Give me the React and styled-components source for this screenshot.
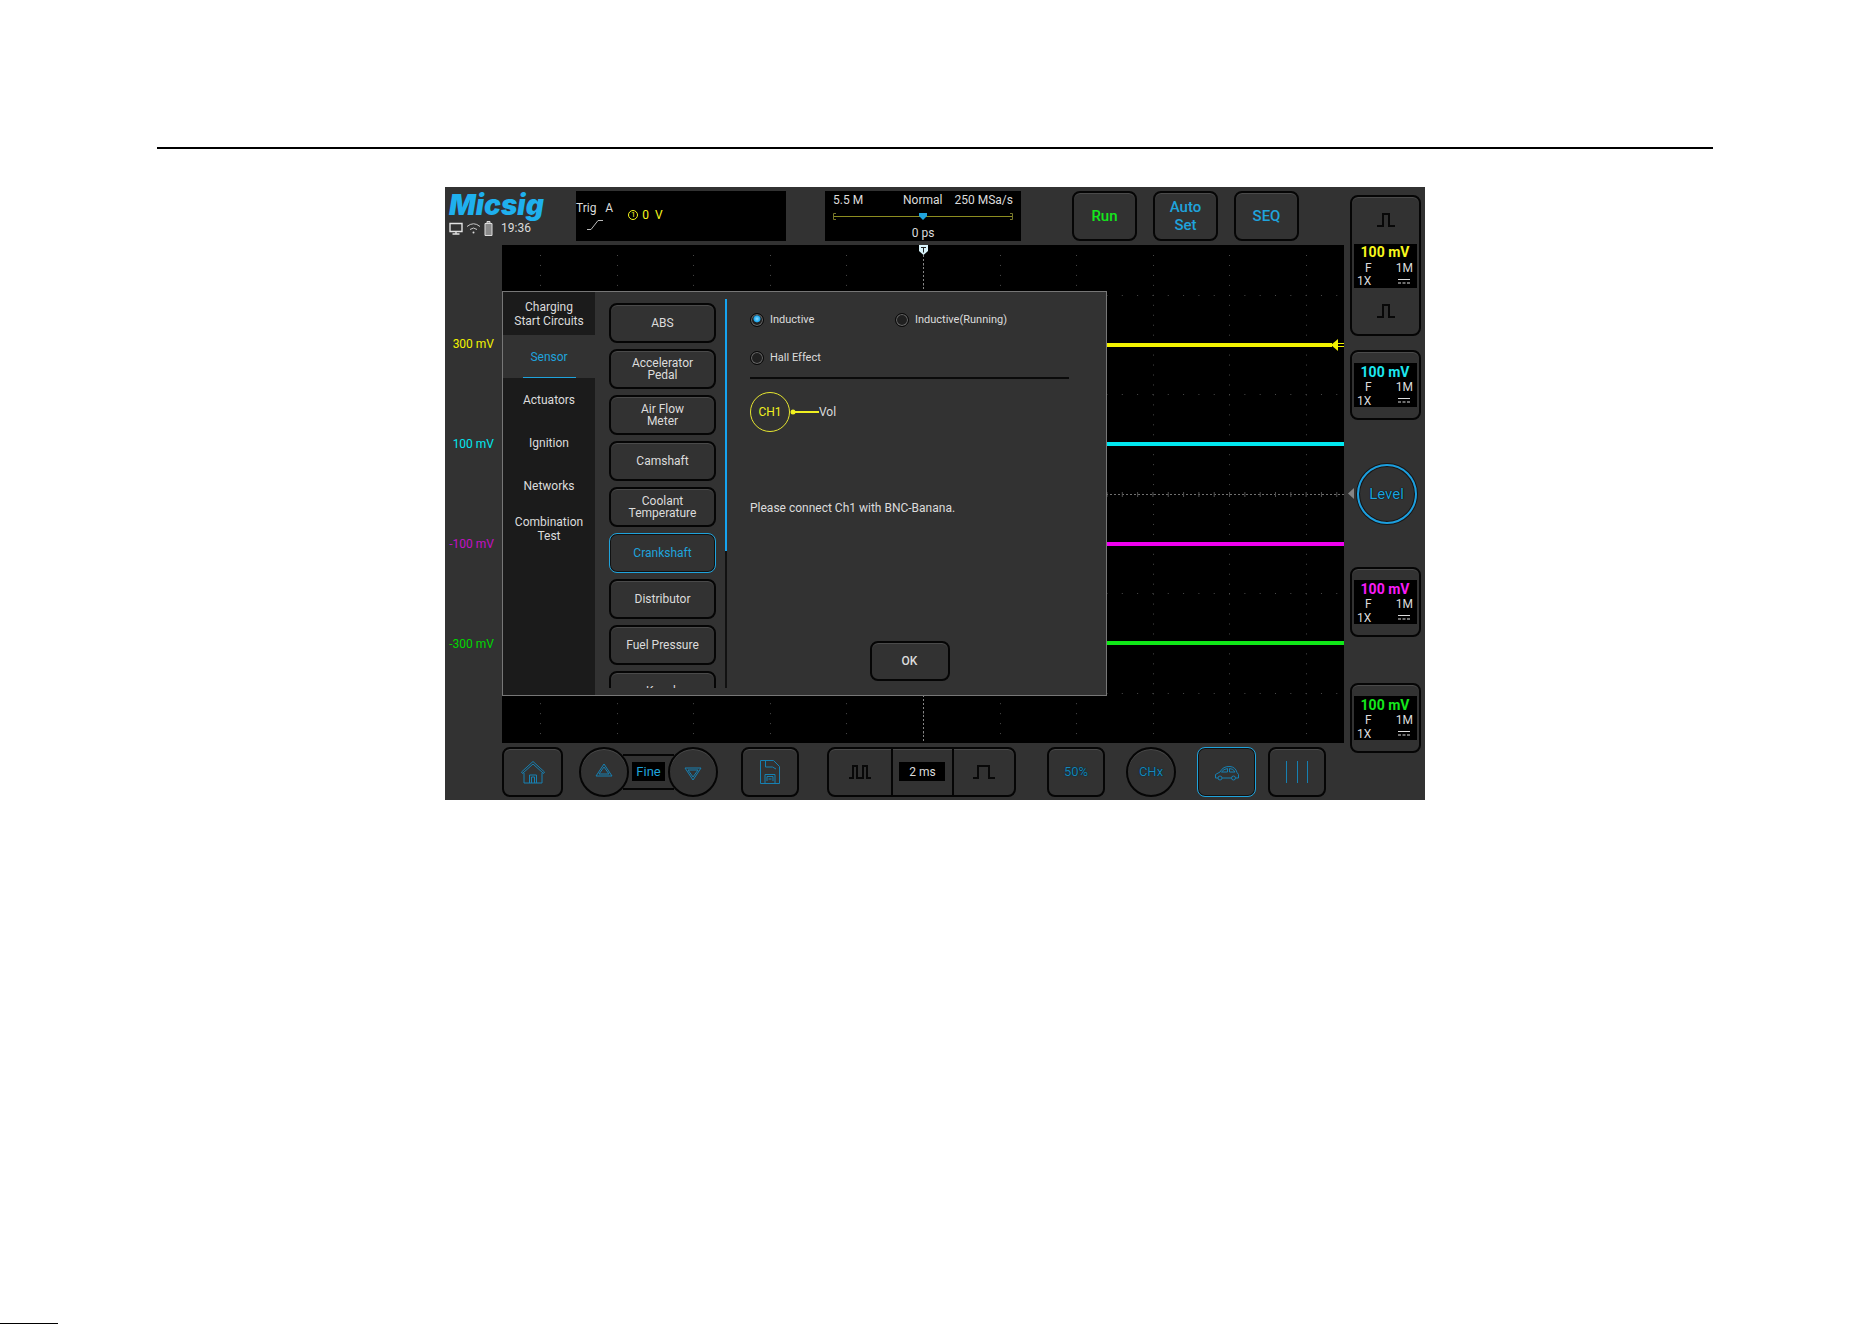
import React, { useState } from "react";
import styled, { createGlobalStyle, css } from "styled-components";

const blue = "#1fa3dc";
const panel = "#323232";

const GlobalStyle = createGlobalStyle`
  *, *::before, *::after { box-sizing: border-box; }
  body { margin: 0; background: #fff; }
  button { margin: 0; padding: 0; font: inherit; color: inherit; cursor: pointer; }
`;

const Page = styled.div`
  min-height: 100vh;
  display: flex;
  flex-direction: column;
  padding: 147px 159px 0 157px;
`;

const Rule = styled.hr`
  width: 100%;
  height: 2px;
  margin: 0 0 38px;
  border: 0;
  background: #000;
`;

const Device = styled.main`
  width: 100%;
  max-width: 980px;
  margin: 0 auto;
  display: flex;
  background: ${panel};
  color: #dcdcdc;
  font: 12px/14px Roboto, "Liberation Sans", sans-serif;
`;

const Primary = styled.div`
  flex: 1;
  min-width: 0;
`;

const Header = styled.header`
  height: 58px;
  display: flex;
  padding: 4px 0;
`;

const Brand = styled.div`
  width: 131px;
  padding-left: 4px;
  flex: none;
`;

const Logo = styled.div`
  font: italic 900 28px/28px Inter, "Open Sans", sans-serif;
  color: #1fb0ee;
`;

const Status = styled.div`
  display: flex;
  align-items: center;
  gap: 3px;
  height: 18px;
  time { margin-left: 5px; }
`;

const Readout = styled.section`
  background: #000;
  height: 50px;
`;

const Trigger = styled(Readout)`
  flex: 0 0 210px;
  display: flex;
  align-items: center;
  gap: 15px;
  padding-bottom: 2px;
`;

const TriggerMode = styled.div`
  display: grid;
  gap: 4px;
  padding-top: 2px;
  white-space: pre;
  svg { margin-left: 11px; }
`;

const TriggerLevel = styled.div`
  display: flex;
  align-items: center;
  gap: 4px;
  color: #f8f81c;
  white-space: pre;
`;

const Ring = styled.span`
  width: 10px;
  height: 10px;
  border: 1px solid currentColor;
  border-radius: 50%;
  font-size: 8px;
  line-height: 8px;
  text-align: center;
`;

const Acquire = styled(Readout)`
  flex: 0 0 196px;
  margin-left: 39px;
  padding: 2px 8px 0;
  display: flex;
  flex-direction: column;
  align-items: center;
  svg { width: 100%; height: 17px; margin: 1px 0; }
`;

const AcquireTop = styled.div`
  width: 100%;
  display: flex;
  span:nth-child(2) { margin: 0 12px 0 auto; }
`;

const keyFace = css`
  display: flex;
  align-items: center;
  justify-content: center;
  background: ${panel};
  border: 2px solid ${(p) => (p.$active ? blue : "#050505")};
  border-width: ${(p) => (p.$active ? "1px" : "2px")};
  border-radius: 8px;
  box-shadow: ${(p) => (p.$active ? "inset 0 0 0 1px #111" : "inset 0 1px 0 #4a4a4a")};
`;

const HeaderKeys = styled.div`
  display: flex;
  gap: 16px;
  margin-left: 51px;
`;

const HeaderKey = styled.button`
  ${keyFace}
  width: 65px;
  height: 50px;
  font-size: 15px;
  font-weight: 500;
  line-height: 18px;
  color: ${(p) => p.$tone || blue};
`;

const Body = styled.div`
  display: flex;
  height: 498px;
`;

const Axis = styled.div`
  flex: 0 0 57px;
  display: grid;
  grid-auto-rows: 100px;
  align-content: start;
  padding-top: 49px;
`;

const AxisLabel = styled.span`
  display: flex;
  align-items: center;
  justify-content: flex-end;
  padding-right: 8px;
  color: ${(p) => p.$tone};
`;

const Plot = styled.div`
  flex: 1;
  min-width: 0;
  position: relative;
  background: #000;
  > svg { display: block; width: 100%; height: 100%; }
`;

const Dialog = styled.section`
  position: absolute;
  left: 0;
  top: 46px;
  width: 605px;
  height: 405px;
  display: flex;
  border: 1px solid #777;
  background: ${panel};
`;

const Menu = styled.nav`
  flex: 0 0 92px;
  background: #1b1b1b;
`;

const MenuItem = styled.button`
  display: flex;
  align-items: center;
  justify-content: center;
  width: 100%;
  height: 43px;
  border: 0;
  white-space: pre-line;
  background: transparent;
  color: ${(p) => (p.$active ? blue : "inherit")};
  ${(p) => p.$active && css`
    background: linear-gradient(${blue}, ${blue}) center bottom / 53px 1px no-repeat, ${panel};
  `}
`;

const Tests = styled.div`
  flex: 0 0 132px;
  margin: 7px 0;
  padding: 4px 9px 0 14px;
  display: flex;
  flex-direction: column;
  gap: 6px;
  overflow: hidden;
  border-right: 2px solid #111;
  border-image: linear-gradient(#16a4f0 252px, #111 252px) 1;
`;

const TestKey = styled.button`
  ${keyFace}
  flex: 0 0 40px;
  line-height: 12px;
  white-space: pre-line;
  color: ${(p) => (p.$active ? blue : "inherit")};
`;

const Detail = styled.div`
  flex: 1;
  display: flex;
  flex-direction: column;
  padding: 21px 37px 14px 23px;
`;

const Choices = styled.fieldset`
  margin: 0;
  padding: 0 0 12px;
  border: 0;
  border-bottom: 2px solid #0a0a0a;
  display: grid;
  grid-template-columns: 145px 1fr;
  row-gap: 24px;
`;

const Choice = styled.label`
  display: flex;
  align-items: center;
  gap: 6px;
  font-size: 11px;
`;

const Radio = styled.input`
  appearance: none;
  width: 14px;
  height: 14px;
  margin: 0;
  border: 1px solid #080808;
  border-radius: 50%;
  background: #202020;
  box-shadow: inset 0 0 0 1px #6a6a6a;
  &:checked {
    background: radial-gradient(circle at 50% 40%, #8fdcff 0, #1fa9ee 3px, #202020 4px);
  }
`;

const Wiring = styled.div`
  display: flex;
  align-items: center;
  margin-top: 13px;
`;

const Channel = styled.span`
  width: 40px;
  height: 40px;
  display: grid;
  place-items: center;
  border: 1px solid #e6e630;
  border-radius: 50%;
  color: #f0f020;
`;

const Hint = styled.p`
  margin: 69px 0 0;
`;

const OkKey = styled.button`
  ${keyFace}
  width: 80px;
  height: 40px;
  margin: auto auto 0;
  font-weight: 500;
`;

const Toolbar = styled.footer`
  height: 57px;
  display: flex;
  align-items: center;
  padding-left: 57px;
`;

const ToolKey = styled.button`
  ${keyFace}
  width: ${(p) => p.$width || 58}px;
  height: 50px;
  border-radius: ${(p) => (p.$round ? "50%" : "8px")};
  color: ${blue};
`;

const Group = styled.div`
  display: flex;
  gap: ${(p) => p.$gap}px;
  margin-left: ${(p) => p.$before || 0}px;
`;

const Stepper = styled.div`
  display: flex;
  align-items: center;
`;

const StepValue = styled.div`
  height: 36px;
  margin: 0 -6px;
  padding: 0 9px;
  display: flex;
  align-items: center;
  border: solid #050505;
  border-width: 2px 0;
`;

const Chip = styled.output`
  display: grid;
  place-items: center;
  width: ${(p) => p.$width}px;
  height: 19px;
  background: #000;
  color: ${(p) => p.$tone || "inherit"};
  font-size: ${(p) => (p.$tone ? 13 : 12)}px;
`;

const TimeBase = styled.div`
  ${keyFace}
  width: 189px;
  height: 50px;
  display: grid;
  grid-template-columns: repeat(3, 1fr);
  > * {
    height: 46px;
    display: grid;
    place-items: center;
    border: 0;
    background: none;
  }
  > * + * { border-left: 2px solid #050505; }
`;

const OutlineText = styled.span`
  font-size: 13px;
  color: #1a86b8;
  text-shadow: 0 0 1px #000, 0 0 2px #10445c;
`;

const Side = styled.aside`
  flex: 0 0 81px;
  display: flex;
  flex-direction: column;
  align-items: center;
  padding: 8px 0 0 2px;
`;

const ChannelCard = styled.section`
  ${keyFace}
  flex-direction: column;
  width: 71px;
  height: ${(p) => (p.$tall ? 141 : 70)}px;
  margin-top: ${(p) => p.$gap || 0}px;
`;

const ScaleKey = styled.button`
  flex: 1;
  width: 100%;
  display: grid;
  place-items: center;
  border: 0;
  background: none;
`;

const ChannelBox = styled.div`
  width: 63px;
  height: 44px;
  display: grid;
  grid-template-columns: 1fr 1fr;
  grid-template-rows: 17px 14px 13px;
  align-items: center;
  padding: 0 4px 0 3px;
  background: #000;
  line-height: 12px;
  strong {
    grid-column: 1 / -1;
    text-align: center;
    font-size: 14px;
    color: ${(p) => p.$tone};
  }
  span:nth-of-type(1) { padding-left: 8px; }
  span:nth-of-type(even) { text-align: right; }
  svg { justify-self: end; margin-right: 3px; }
`;

const LevelRow = styled.div`
  position: relative;
  margin: 44px 0 0 2px;
  > svg { position: absolute; left: -9px; top: 24px; }
`;

const LevelKnob = styled.button`
  display: block;
  width: 60px;
  height: 60px;
  border: 2px solid #1c9fdf;
  border-radius: 50%;
  background: ${panel};
  box-shadow: 0 0 0 1px #151515, inset 0 0 0 1px #151515;
  font-size: 15px;
  color: ${blue};
  text-shadow: 0 0 1px #000, 0 0 1px #000;
`;

const PageEdge = styled.div`
  width: 58px;
  height: 1px;
  margin: auto 0 0 -157px;
  background: #000;
`;

const menu = ["Charging\nStart Circuits", "Sensor", "Actuators", "Ignition", "Networks", "Combination\nTest"];
const tests = ["ABS", "Accelerator\nPedal", "Air Flow\nMeter", "Camshaft", "Coolant\nTemperature", "Crankshaft", "Distributor", "Fuel Pressure", "Knock"];
const traces = [
  { label: "300 mV", tone: "#f2f200", y: 100 },
  { label: "100 mV", tone: "#00e8f0", y: 199 },
  { label: "-100 mV", tone: "#f000f0", axis: "#c410c4", y: 299 },
  { label: "-300 mV", tone: "#10e818", axis: "#00d800", y: 398 },
];

const pulses = {
  single: "M3 14h6V2h6v12h6",
  wide: "M1 14h5V2h11v12h6",
  twin: "M1 14h4V2h4v12h6V2h4v12h4",
};

const Pulse = ({ shape = "single" }) => (
  <svg width="24" height="16" viewBox="0 0 24 16" fill="none" stroke="#080808" strokeWidth="2" aria-hidden="true">
    <path d={pulses[shape]} />
  </svg>
);

const Graticule = () => {
  const xs = Array.from({ length: 11 }, (_, i) => Math.round(38 + i * 76.6) + 0.5);
  const ys = [50, 149, 348, 448];
  return (
    <svg viewBox="0 0 842 498" preserveAspectRatio="none" aria-hidden="true">
      <g stroke="#4a4a4a" strokeWidth="1">
        {xs.map((x) => (
          <line key={x} x1={x} x2={x} y1="10" y2="490" strokeDasharray="1 8.96" />
        ))}
        {ys.map((y) => (
          <line key={y} x1="7" x2="842" y1={y + 0.5} y2={y + 0.5} strokeDasharray="1 14.32" />
        ))}
      </g>
      <path d="M421.500 10V498" stroke="#858585" strokeDasharray="2 2" />
      <path d="M0 249.500H842" stroke="#707070" strokeDasharray="2 2" />
      <path d="M7 249.500H842" stroke="#505050" strokeWidth="5" strokeDasharray="1 14.320" />
      {traces.map((t) => (
        <line key={t.label} x1="0" x2="842" y1={t.y} y2={t.y} stroke={t.tone} strokeWidth="4" />
      ))}
      <path d="M830 93h12v14h-12z" fill="#000" />
      <path d="M829 100l7-6v12z" fill="#f2f200" />
      <path d="M836 98.500h6M836 101.500h6" stroke="#f2f200" />
      <path d="M417 0h9v6l-4.500 4-4.500-4z" fill="#d8f3fb" />
      <path d="M419 2.500h5M421.500 2.500v5" stroke="#222" />
    </svg>
  );
};

const Coupling = () => (
  <svg width="12" height="5" viewBox="0 0 12 5" stroke="#ddd" aria-hidden="true">
    <path d="M0 .5h12" />
    <path d="M0 4h12" strokeDasharray="3 1.500" />
  </svg>
);

const Values = ({ tone }) => (
  <ChannelBox $tone={tone}>
    <strong>100 mV</strong>
    <span>F</span>
    <span>1M</span>
    <span>1X</span>
    <Coupling />
  </ChannelBox>
);

const Icon = ({ children, size = 26 }) => (
  <svg width={size} height={size} viewBox="0 0 26 26" fill="none" stroke="#1680b2" strokeWidth="1" strokeLinejoin="round" aria-hidden="true">
    {children}
  </svg>
);

export default function App() {
  const [sensor, setSensor] = useState("Inductive");
  return (
    <>
      <GlobalStyle />
      <Page>
        <Rule />
        <Device>
          <Primary>
            <Header>
              <Brand>
                <Logo>Micsig</Logo>
                <Status>
                  <svg width="14" height="13" viewBox="0 0 14 13" fill="none" stroke="#e2e2e2" aria-hidden="true">
                    <path d="M1 1.500h12v8H1zM7 9.500v2M3.500 12h7" strokeWidth="1.400" />
                  </svg>
                  <svg width="15" height="12" viewBox="0 0 15 12" fill="none" stroke="#c8c8c8" aria-hidden="true">
                    <path d="M1 4.500Q7.500-1 14 4.500M4 7.500Q7.500 4.500 11 7.500" />
                    <circle cx="7.500" cy="10.500" r="1" fill="#ddd" stroke="none" />
                  </svg>
                  <svg width="9" height="15" viewBox="0 0 9 15" aria-hidden="true">
                    <path d="M3 2V.5h3V2M1 2.500h7v12H1z" fill="#8a8a8a" stroke="#ddd" />
                  </svg>
                  <time>19:36</time>
                </Status>
              </Brand>
              <Trigger aria-label="Trigger">
                <TriggerMode>
                  <span>{"Trig   A"}</span>
                  <svg width="16" height="12" viewBox="0 0 16 12" fill="none" stroke="#bbb" aria-hidden="true">
                    <path d="M0 10.500h4l7-9h5" />
                  </svg>
                </TriggerMode>
                <TriggerLevel>
                  <Ring>1</Ring>
                  <span>{"0  V"}</span>
                </TriggerLevel>
              </Trigger>
              <Acquire aria-label="Acquisition">
                <AcquireTop>
                  <span>5.5 M</span>
                  <span>Normal</span>
                  <span>250 MSa/s</span>
                </AcquireTop>
                <svg viewBox="0 0 180 17" aria-hidden="true">
                  <path d="M0 8.500H180" stroke="#8c8c20" />
                  <path d="M3 5.500H.5v6H3M177 5.500h2.500v6H177" fill="none" stroke="#77772c" />
                  <path d="M86 5h8v3l-4 4-4-4z" fill="#1fa3dc" />
                </svg>
                <span>0 ps</span>
              </Acquire>
              <HeaderKeys>
                <HeaderKey $tone="#14e81c">Run</HeaderKey>
                <HeaderKey>Auto<br />Set</HeaderKey>
                <HeaderKey>SEQ</HeaderKey>
              </HeaderKeys>
            </Header>

            <Body>
              <Axis>
                {traces.map((t) => (
                  <AxisLabel key={t.label} $tone={t.axis || t.tone}>{t.label}</AxisLabel>
                ))}
              </Axis>
              <Plot>
                <Graticule />
                <Dialog aria-label="Sensor tests">
                  <Menu>
                    {menu.map((m) => (
                      <MenuItem key={m} $active={m === "Sensor"}>{m}</MenuItem>
                    ))}
                  </Menu>
                  <Tests>
                    {tests.map((t) => (
                      <TestKey key={t} $active={t === "Crankshaft"}>{t}</TestKey>
                    ))}
                  </Tests>
                  <Detail>
                    <Choices>
                      {["Inductive", "Inductive(Running)", "Hall Effect"].map((name) => (
                        <Choice key={name}>
                          <Radio type="radio" name="sensor" checked={sensor === name} onChange={() => setSensor(name)} />
                          {name}
                        </Choice>
                      ))}
                    </Choices>
                    <Wiring>
                      <Channel>CH1</Channel>
                      <svg width="29" height="6" viewBox="0 0 29 6" aria-hidden="true">
                        <path d="M2 3h27" stroke="#f0f020" strokeWidth="2" />
                        <circle cx="3" cy="3" r="2.500" fill="#f0f020" />
                      </svg>
                      <span>Vol</span>
                    </Wiring>
                    <Hint>Please connect Ch1 with BNC-Banana.</Hint>
                    <OkKey>OK</OkKey>
                  </Detail>
                </Dialog>
              </Plot>
            </Body>

            <Toolbar>
              <Group $gap={16}>
                <ToolKey $width={61} aria-label="Home">
                  <Icon>
                    <path d="M1.500 13L13 2.500 24.500 13l-1 1.500L13 5 2.500 14.500zM4 14v10h18V14M9.500 24v-8h7v8M11.500 24v-6h3v6" />
                  </Icon>
                </ToolKey>
                <Stepper>
                  <ToolKey $width={50} $round aria-label="Up">
                    <Icon><path d="M13 5l8 12H5zM13 8l5 7H8z" /></Icon>
                  </ToolKey>
                  <StepValue><Chip $width={33} $tone={blue}>Fine</Chip></StepValue>
                  <ToolKey $width={50} $round aria-label="Down">
                    <Icon><path d="M13 21L5 9h16zM13 18l-5-7h10z" /></Icon>
                  </ToolKey>
                </Stepper>
              </Group>
              <Group $before={23} $gap={28}>
                <ToolKey aria-label="Save">
                  <Icon>
                    <path d="M3.500 1.500h13l6 6v17h-19zM8.500 2v6h7l3.500 2M8 24v-8.500h10V24M10 22v-4.500h6V22M11.500 20h3" />
                  </Icon>
                </ToolKey>
                <TimeBase>
                  <button aria-label="Compress time"><Pulse shape="twin" /></button>
                  <div><Chip $width={46}>2 ms</Chip></div>
                  <button aria-label="Expand time"><Pulse shape="wide" /></button>
                </TimeBase>
              </Group>
              <Group $before={31} $gap={21}>
                <ToolKey><OutlineText>50%</OutlineText></ToolKey>
                <ToolKey $width={50} $round><OutlineText>CHx</OutlineText></ToolKey>
                <Group $gap={12}>
                  <ToolKey $active $width={59} aria-label="Automotive">
                    <Icon>
                      <path d="M4 19H1.500v-3.500L6 13q3-6 10-5.500 5.500.5 7 6l1.500 2V19H22M8 19h9M7.500 13h6V9.500Q9.500 10 7.500 13zM15.500 9.500V13h5.500q-1.500-3.500-5.500-3.500z" />
                      <circle cx="6" cy="19" r="2" /><circle cx="19.500" cy="19" r="2" />
                    </Icon>
                  </ToolKey>
                  <ToolKey aria-label="Cursors">
                    <Icon><path d="M2.500 2v22M13.500 2v22M23.500 2v22" /></Icon>
                  </ToolKey>
                </Group>
              </Group>
            </Toolbar>
          </Primary>

          <Side>
            <ChannelCard $tall>
              <ScaleKey aria-label="Scale up"><Pulse /></ScaleKey>
              <Values tone="#f8f81c" />
              <ScaleKey aria-label="Scale down"><Pulse /></ScaleKey>
            </ChannelCard>
            <ChannelCard $gap={14}><Values tone="#1ce8f0" /></ChannelCard>
            <LevelRow>
              <svg width="6" height="11" viewBox="0 0 6 11" aria-hidden="true"><path d="M6 0v11L0 5.500z" fill="#858585" /></svg>
              <LevelKnob>Level</LevelKnob>
            </LevelRow>
            <ChannelCard $gap={43}><Values tone="#f81cf8" /></ChannelCard>
            <ChannelCard $gap={46}><Values tone="#14e81c" /></ChannelCard>
          </Side>
        </Device>
        <PageEdge />
      </Page>
    </>
  );
}
